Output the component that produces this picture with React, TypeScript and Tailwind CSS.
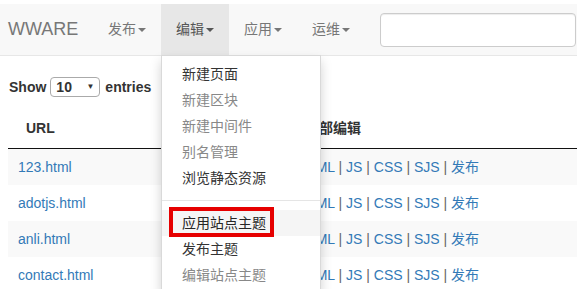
import React from 'react';

const font = { fontFamily: '"Liberation Sans", Arial, "Noto Sans CJK SC", sans-serif' };

const navItems = ['发布', '编辑', '应用', '运维'];

const menu: { label: string; muted?: boolean; divider?: boolean; hover?: boolean }[] = [
  { label: '新建页面' },
  { label: '新建区块', muted: true },
  { label: '新建中间件', muted: true },
  { label: '别名管理', muted: true },
  { label: '浏览静态资源' },
  { label: '', divider: true },
  { label: '应用站点主题', hover: true },
  { label: '发布主题' },
  { label: '编辑站点主题', muted: true },
];

const rows = ['123.html', 'adotjs.html', 'anli.html', 'contact.html'];
const actions = ['HTML', 'JS', 'CSS', 'SJS', '发布'];

function Caret({ color = '#777' }: { color?: string }) {
  return (
    <span
      className="inline-block w-0 h-0 ml-[2px] border-t-4 border-x-4 border-x-transparent align-middle"
      style={{ borderTopColor: color }}
    />
  );
}

function Dropdown() {
  return (
    <div className="absolute left-0 top-full z-10 w-[160px] bg-white border border-black/15 rounded-b shadow-[0_6px_12px_rgba(0,0,0,0.175)] py-[5px] text-[14px]">
      {menu.map((m, i) =>
        m.divider ? (
          <div key={i} className="h-px my-[9px] bg-[#e5e5e5]" />
        ) : (
          <div
            key={i}
            className={`px-5 py-[3px] leading-5 ${m.muted ? 'text-[#888]' : 'text-[#333]'} ${m.hover ? 'bg-[#f5f5f5] text-[#262626]' : ''}`}
          >
            {m.label}
          </div>
        )
      )}
      <div className="absolute left-[7px] top-[151px] w-[105px] h-[30px] border-4 border-[#e60000]" />
    </div>
  );
}

export default function App() {
  return (
    <div className="relative w-[577px] h-[289px] overflow-hidden bg-white text-[14px] text-[#333]" style={font}>
      <div className="h-1" />
      <nav className="flex h-[52px] bg-[#f8f8f8] border-b border-[#e7e7e7]">
        <div className="flex items-center w-[93px] pl-2 text-[18px] text-[#777]">WWARE</div>
        {navItems.map((item, i) => (
          <div
            key={item}
            className={`relative flex items-center w-[68px] pl-[15px] ${i === 1 ? 'bg-[#e7e7e7] text-[#555]' : 'text-[#777]'}`}
          >
            <span>{item}</span>
            <Caret color={i === 1 ? '#555' : '#777'} />
            {i === 1 && <Dropdown />}
          </div>
        ))}
        <div className="flex items-center pl-[15px]">
          <div className="w-[196px] h-[34px] bg-white border border-[#ccc] rounded shadow-[inset_0_1px_1px_rgba(0,0,0,0.075)]" />
        </div>
      </nav>

      <div className="px-2 pt-[21px]">
        <div className="flex items-center h-5 font-bold pl-px">
          <span>Show</span>
          <div className="flex items-center justify-between w-[50px] h-5 ml-1 mr-[5px] px-[5px] border border-[#aaa] rounded-sm">
            <span>10</span>
            <span className="text-[8px] leading-none">▼</span>
          </div>
          <span>entries</span>
        </div>

        <table className="mt-[11px] w-[640px] table-fixed border-collapse">
          <colgroup>
            <col className="w-[279px]" />
            <col />
          </colgroup>
          <thead>
            <tr>
              <th className="text-left font-bold px-[18px] py-[10px] leading-5 border-b border-[#111]">URL</th>
              <th className="text-left font-bold px-[18px] py-[10px] leading-5 border-b border-[#111]">全部编辑</th>
            </tr>
          </thead>
          <tbody>
            {rows.map((r, i) => (
              <tr key={r} className={i % 2 === 0 ? 'bg-[#f9f9f9]' : 'bg-white'}>
                <td className="px-[10px] py-2 leading-5 text-[#337ab7]">{r}</td>
                <td className="px-[10px] py-2 leading-5 whitespace-nowrap">
                  {actions.map((a, j) => (
                    <React.Fragment key={a}>
                      {j > 0 && <span className="text-[#666]"> | </span>}
                      <span className="text-[#337ab7]">{a}</span>
                    </React.Fragment>
                  ))}
                </td>
              </tr>
            ))}
          </tbody>
        </table>
      </div>
    </div>
  );
}
